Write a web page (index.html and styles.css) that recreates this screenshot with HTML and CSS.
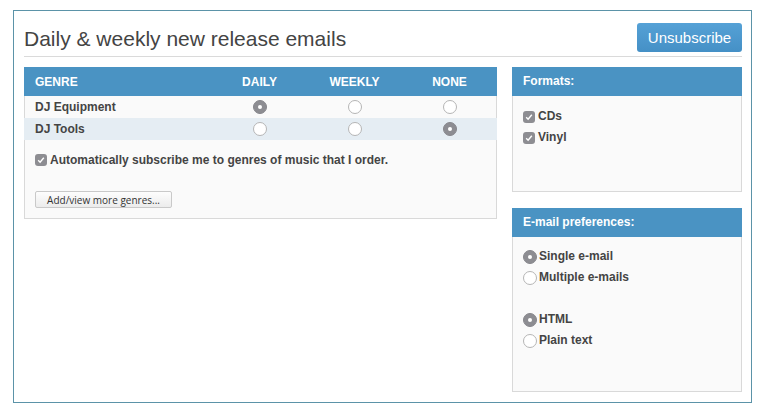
FILE: index.html
```html
<!DOCTYPE html>
<html lang="en">

<head>
    <meta charset="UTF-8">
    <title>Release emails</title>
    <link rel="stylesheet" href="styles.css">
</head>

<body>
    <div class="frame">
        <div class="top">
            <h1>Daily &amp; weekly new release emails</h1>
            <button class="unsub">Unsubscribe</button>
        </div>

        <div class="content">
            <div class="panel genres">
                <table>
                    <tr class="head">
                        <th class="name">GENRE</th>
                        <th>DAILY</th>
                        <th>WEEKLY</th>
                        <th>NONE</th>
                    </tr>
                    <tr>
                        <td class="name">DJ Equipment</td>
                        <td><span class="radio on"></span></td>
                        <td><span class="radio"></span></td>
                        <td><span class="radio"></span></td>
                    </tr>
                    <tr class="alt">
                        <td class="name">DJ Tools</td>
                        <td><span class="radio"></span></td>
                        <td><span class="radio"></span></td>
                        <td><span class="radio on"></span></td>
                    </tr>
                </table>
                <label class="auto">
                    <span class="check"><svg viewBox="0 0 12 12" width="12" height="12"><path d="M3.2 6.3 L5.1 8.2 L8.8 3.8" fill="none" stroke="#fff" stroke-width="1.4" /></svg></span>
                    Automatically subscribe me to genres of music that I order.
                </label>
                <button class="more">Add/view more genres...</button>
            </div>

            <div class="side">
                <div class="panel formats">
                    <div class="panel-head">Formats:</div>
                    <div class="panel-body">
                        <label class="opt">
                            <span class="check"><svg viewBox="0 0 12 12" width="12" height="12"><path d="M3.2 6.3 L5.1 8.2 L8.8 3.8" fill="none" stroke="#fff" stroke-width="1.4" /></svg></span>
                            CDs
                        </label>
                        <label class="opt">
                            <span class="check"><svg viewBox="0 0 12 12" width="12" height="12"><path d="M3.2 6.3 L5.1 8.2 L8.8 3.8" fill="none" stroke="#fff" stroke-width="1.4" /></svg></span>
                            Vinyl
                        </label>
                    </div>
                </div>

                <div class="panel prefs">
                    <div class="panel-head">E-mail preferences:</div>
                    <div class="panel-body">
                        <label class="opt"><span class="radio big on"></span>Single e-mail</label>
                        <label class="opt"><span class="radio big"></span>Multiple e-mails</label>
                        <div class="spacer"></div>
                        <label class="opt"><span class="radio big on"></span>HTML</label>
                        <label class="opt"><span class="radio big"></span>Plain text</label>
                    </div>
                </div>
            </div>
        </div>
    </div>
</body>

</html>
```

FILE: styles.css
```css
* {
    padding: 0;
    margin: 0;
    box-sizing: border-box;
}

body {
    font-family: "Liberation Sans", Arial, sans-serif;
    color: #444;
    background-color: #fff;
}

.frame {
    margin: 10px 0 0 13px;
    width: 739px;
    height: 393px;
    border: 1px solid #5b93a8;
    padding: 12px 9px 0 10px;
}

.top {
    display: flex;
    justify-content: space-between;
    align-items: center;
    border-bottom: 1px solid #dadada;
    padding-bottom: 4px;
}

.top h1 {
    font-size: 21px;
    font-weight: normal;
    color: #444;
    padding-top: 3px;
}

.unsub {
    width: 105px;
    height: 29px;
    border: 0;
    border-radius: 3px;
    background: linear-gradient(#55a1d6, #4590c6);
    color: #fff;
    font-family: "Liberation Sans", Arial, sans-serif;
    font-size: 15px;
}

.content {
    display: flex;
    justify-content: space-between;
    align-items: flex-start;
    margin-top: 10px;
}

.panel {
    border: 1px solid #d9d9d9;
    background-color: #fafafa;
}

/* genre table */

.genres {
    width: 473px;
    padding-bottom: 10px;
}

.genres table {
    width: calc(100% + 2px);
    margin: -1px -1px 0;
    border-collapse: collapse;
}

.genres th,
.genres td {
    width: 95px;
    text-align: center;
    font-size: 12px;
    font-weight: bold;
    padding: 0;
}

.genres .name {
    width: auto;
    text-align: left;
    padding-left: 11px;
}

.genres tr.head {
    height: 29px;
    background-color: #4a93c3;
    color: #fff;
}

.genres tr {
    height: 22px;
}

.genres tr.alt {
    background-color: #e5edf3;
}

.genres td .radio {
    vertical-align: middle;
}

.auto {
    display: flex;
    align-items: center;
    gap: 3px;
    font-size: 12px;
    font-weight: bold;
    line-height: 16px;
    margin: 12px 0 0 10px;
}

.more {
    display: block;
    margin: 23px 0 0 10px;
    width: 137px;
    height: 17px;
    border: 1px solid #c9c9c9;
    border-radius: 2px;
    background: linear-gradient(#fdfdfd, #ececec);
    font-family: "Open Sans", sans-serif;
    font-size: 10px;
    color: #333;
}

/* radios and checks */

.radio {
    display: inline-block;
    width: 14px;
    height: 14px;
    border-radius: 50%;
    border: 1px solid #b5b5b5;
    background-color: #fff;
    position: relative;
}

.radio.on {
    border-color: #86868b;
    background-color: #8d8d92;
}

.radio.on::after {
    content: '';
    position: absolute;
    top: 4px;
    left: 4px;
    width: 4px;
    height: 4px;
    border-radius: 50%;
    background-color: #fff;
}

.check {
    display: inline-flex;
    width: 12px;
    height: 12px;
    border-radius: 3px;
    background-color: #8d8d92;
    flex-shrink: 0;
}

/* side panels */

.side {
    width: 230px;
}

.panel-head {
    margin: -1px -1px 0;
    height: 29px;
    padding: 0 11px;
    background-color: #4a93c3;
    color: #fff;
    font-size: 12px;
    font-weight: bold;
    line-height: 29px;
}

.panel-body {
    padding: 10px 10px;
}

.opt {
    display: flex;
    align-items: center;
    gap: 3px;
    font-size: 12px;
    font-weight: bold;
    line-height: 21px;
}

.formats {
    height: 125px;
}

.prefs {
    margin-top: 16px;
    height: 184px;
}

.prefs .panel-body {
    padding-top: 9px;
}

.prefs .opt {
    gap: 2px;
}

.spacer {
    height: 21px;
}
```
